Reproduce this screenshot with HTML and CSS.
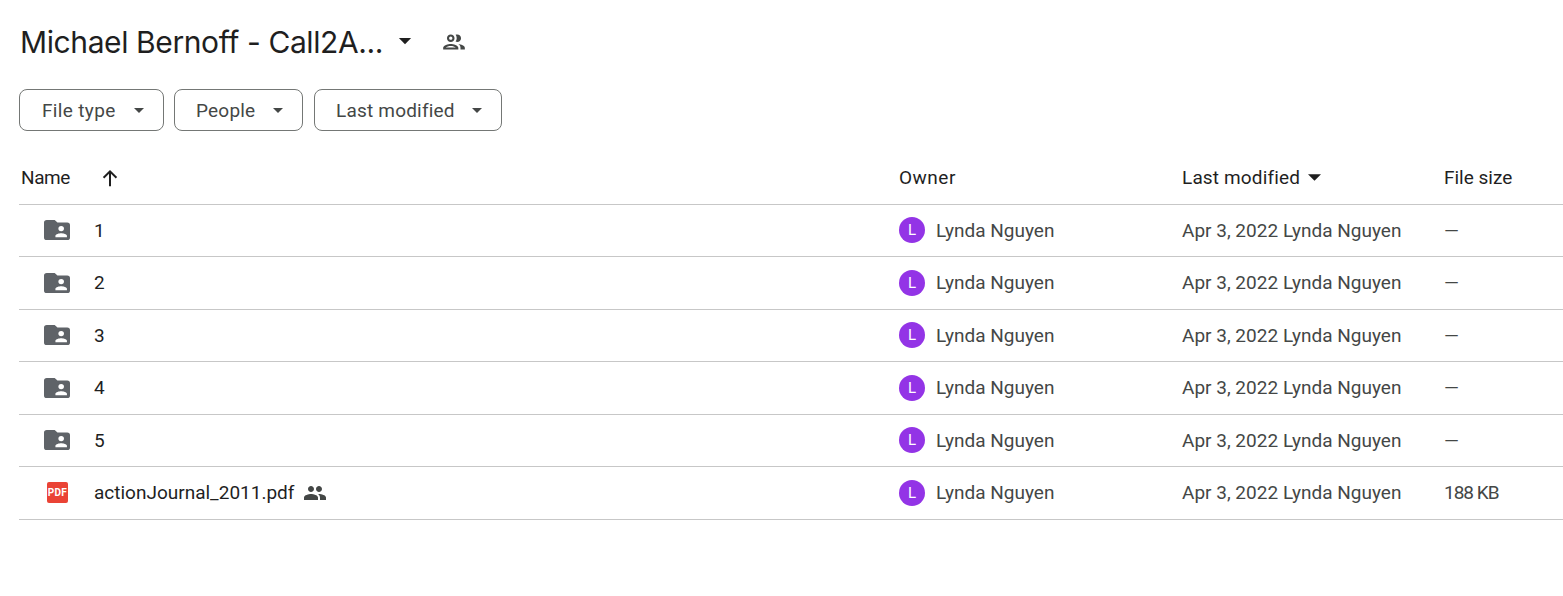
FILE: index.html
```html
<!DOCTYPE html>
<html lang="en">
<head>
<meta charset="utf-8">
<title>Michael Bernoff - Call2A...</title>
<link rel="stylesheet" href="styles.css">
</head>
<body>
<main class="page">
  <header class="title-bar">
    <h1 class="title">Michael Bernoff - Call2A...</h1>
    <svg class="title-caret" viewBox="0 0 14 8"><path d="M0 0h14L7 7z"/></svg>
    <svg class="title-people" viewBox="0 0 24 24"><path d="M9 13.75c-2.34 0-7 1.17-7 3.5V19h14v-1.75c0-2.33-4.66-3.5-7-3.5zM4.34 17c.84-.58 2.87-1.25 4.66-1.25s3.82.67 4.66 1.25H4.34zM9 12c1.93 0 3.5-1.57 3.5-3.5S10.93 5 9 5 5.5 6.57 5.5 8.5 7.07 12 9 12zm0-5c.83 0 1.5.67 1.5 1.5S9.83 10 9 10s-1.5-.67-1.5-1.5S8.17 7 9 7zm7.04 6.81c1.16.84 1.96 1.96 1.96 3.44V19h4v-1.75c0-2.02-3.5-3.17-5.96-3.44zM15 12c1.93 0 3.5-1.57 3.5-3.5S16.93 5 15 5c-.54 0-1.04.13-1.5.35.63.89 1 1.98 1 3.15s-.37 2.26-1 3.15c.46.22.96.35 1.5.35z"/></svg>
  </header>

  <div class="filters">
    <button class="chip chip-type">File type<svg class="chip-caret" viewBox="0 0 10 5"><path d="M0 0h10L5 5z"/></svg></button>
    <button class="chip chip-people">People<svg class="chip-caret" viewBox="0 0 10 5"><path d="M0 0h10L5 5z"/></svg></button>
    <button class="chip chip-mod">Last modified<svg class="chip-caret" viewBox="0 0 10 5"><path d="M0 0h10L5 5z"/></svg></button>
  </div>

  <div class="table">
    <div class="row head">
      <div class="cell name-head">Name<svg class="sort-arrow" viewBox="0 0 16 16"><path d="M8 1.500 2.300 7.200l1.100 1.100 3.800-3.800v10h1.600v-10l3.800 3.800 1.100-1.100z"/></svg></div>
      <div class="cell owner-head">Owner</div>
      <div class="cell modified-head">Last modified<svg class="head-caret" viewBox="0 0 14 7"><path d="M0 0h14L7 7z"/></svg></div>
      <div class="cell">File size</div>
    </div>

    <div class="row item">
      <div class="cell name"><span class="icon"><svg class="folder" viewBox="0 1 28 23" preserveAspectRatio="none"><path d="M3 1h8.500l3 3H25a3 3 0 0 1 3 3v14a3 3 0 0 1-3 3H3a3 3 0 0 1-3-3V4a3 3 0 0 1 3-3z"/><circle class="person" cx="18.500" cy="10.800" r="3"/><path class="person" d="M12.300 20.700v-1.500c0-2.100 4.100-3.100 6.200-3.100s6.200 1 6.200 3.100v1.500z"/></svg></span>1</div>
      <div class="cell owner"><span class="avatar">L</span>Lynda Nguyen</div>
      <div class="cell meta"><span class="date">Apr 3, 2022</span>Lynda Nguyen</div>
      <div class="cell meta">—</div>
    </div>
    <div class="row item">
      <div class="cell name"><span class="icon"><svg class="folder" viewBox="0 1 28 23" preserveAspectRatio="none"><path d="M3 1h8.500l3 3H25a3 3 0 0 1 3 3v14a3 3 0 0 1-3 3H3a3 3 0 0 1-3-3V4a3 3 0 0 1 3-3z"/><circle class="person" cx="18.500" cy="10.800" r="3"/><path class="person" d="M12.300 20.700v-1.500c0-2.100 4.100-3.100 6.200-3.100s6.200 1 6.200 3.100v1.500z"/></svg></span>2</div>
      <div class="cell owner"><span class="avatar">L</span>Lynda Nguyen</div>
      <div class="cell meta"><span class="date">Apr 3, 2022</span>Lynda Nguyen</div>
      <div class="cell meta">—</div>
    </div>
    <div class="row item">
      <div class="cell name"><span class="icon"><svg class="folder" viewBox="0 1 28 23" preserveAspectRatio="none"><path d="M3 1h8.500l3 3H25a3 3 0 0 1 3 3v14a3 3 0 0 1-3 3H3a3 3 0 0 1-3-3V4a3 3 0 0 1 3-3z"/><circle class="person" cx="18.500" cy="10.800" r="3"/><path class="person" d="M12.300 20.700v-1.500c0-2.100 4.100-3.100 6.200-3.100s6.200 1 6.200 3.100v1.500z"/></svg></span>3</div>
      <div class="cell owner"><span class="avatar">L</span>Lynda Nguyen</div>
      <div class="cell meta"><span class="date">Apr 3, 2022</span>Lynda Nguyen</div>
      <div class="cell meta">—</div>
    </div>
    <div class="row item">
      <div class="cell name"><span class="icon"><svg class="folder" viewBox="0 1 28 23" preserveAspectRatio="none"><path d="M3 1h8.500l3 3H25a3 3 0 0 1 3 3v14a3 3 0 0 1-3 3H3a3 3 0 0 1-3-3V4a3 3 0 0 1 3-3z"/><circle class="person" cx="18.500" cy="10.800" r="3"/><path class="person" d="M12.300 20.700v-1.500c0-2.100 4.100-3.100 6.200-3.100s6.200 1 6.200 3.100v1.500z"/></svg></span>4</div>
      <div class="cell owner"><span class="avatar">L</span>Lynda Nguyen</div>
      <div class="cell meta"><span class="date">Apr 3, 2022</span>Lynda Nguyen</div>
      <div class="cell meta">—</div>
    </div>
    <div class="row item">
      <div class="cell name"><span class="icon"><svg class="folder" viewBox="0 1 28 23" preserveAspectRatio="none"><path d="M3 1h8.500l3 3H25a3 3 0 0 1 3 3v14a3 3 0 0 1-3 3H3a3 3 0 0 1-3-3V4a3 3 0 0 1 3-3z"/><circle class="person" cx="18.500" cy="10.800" r="3"/><path class="person" d="M12.300 20.700v-1.500c0-2.100 4.100-3.100 6.200-3.100s6.200 1 6.200 3.100v1.500z"/></svg></span>5</div>
      <div class="cell owner"><span class="avatar">L</span>Lynda Nguyen</div>
      <div class="cell meta"><span class="date">Apr 3, 2022</span>Lynda Nguyen</div>
      <div class="cell meta">—</div>
    </div>
    <div class="row item">
      <div class="cell name"><span class="icon"><span class="pdf">PDF</span></span>actionJournal_2011.pdf<svg class="shared" viewBox="0 0 24 24"><path d="M16 11c1.660 0 2.990-1.340 2.990-3S17.660 5 16 5s-3 1.340-3 3 1.340 3 3 3zm-8 0c1.660 0 2.990-1.340 2.990-3S9.660 5 8 5 5 6.340 5 8s1.340 3 3 3zm0 2c-2.330 0-7 1.170-7 3.500V19h14v-2.500c0-2.330-4.670-3.500-7-3.500zm8 0c-.29 0-.62.02-.97.05 1.160.84 1.970 1.970 1.970 3.450V19h6v-2.500c0-2.330-4.670-3.500-7-3.500z"/></svg></div>
      <div class="cell owner"><span class="avatar">L</span>Lynda Nguyen</div>
      <div class="cell meta"><span class="date">Apr 3, 2022</span>Lynda Nguyen</div>
      <div class="cell meta file-size">188 KB</div>
    </div>
  </div>
</main>
</body>
</html>
```
FILE: styles.css
```css
* { box-sizing: border-box; }
html, body { margin: 0; height: 100%; background: #fff; overflow: hidden; }
body { font-family: Roboto, "Liberation Sans", sans-serif; color: #1f1f1f; }

.page { padding: 0 0 0 19px; }

.title-bar { display: flex; align-items: center; height: 83px; }
.title { margin: 0 0 0 1px; font-family: Inter, sans-serif; font-size: 30px; font-weight: 400; letter-spacing: -0.4px; color: #1f1f1f; white-space: nowrap; }
.title-caret { width: 14px; height: 7px; margin-left: 15px; fill: #1f1f1f; }
.title-people { width: 26px; height: 26px; margin-left: 29px; fill: #444746; }

.filters { display: flex; gap: 10px; height: 42px; margin-top: 6px; }
.chip { display: flex; align-items: center; justify-content: space-between; height: 42px; padding: 0 19px 0 21px; background: #fff; border: 1px solid #747775; border-radius: 8px; font: 400 19px Roboto, sans-serif; letter-spacing: 0.2px; color: #444746; }
.chip-type { width: 145px; padding-left: 22px; letter-spacing: 0.35px; }
.chip-people { width: 129px; }
.chip-mod { width: 188px; margin-left: 1px; }
.chip-caret { width: 10px; height: 5px; fill: #444746; }

.table { margin-top: 21px; }
.row { display: grid; grid-template-columns: 880px 283px 262px 1fr; align-items: center; border-bottom: 1px solid #c7c7c7; }
.head { height: 52.5px; font-size: 19px; color: #1f1f1f; }
.item { height: 52.5px; font-size: 19px; }
.cell { display: flex; align-items: center; white-space: nowrap; }
.name-head { padding-left: 2px; letter-spacing: -0.4px; }
.owner-head { letter-spacing: 0.5px; }
.modified-head { letter-spacing: 0.15px; }
.sort-arrow { width: 20px; height: 20px; margin-left: 30px; fill: #1f1f1f; }
.head-caret { width: 13px; height: 7px; margin-left: 8px; fill: #1f1f1f; }

.name { padding-left: 25px; color: #1f1f1f; }
.icon { display: flex; align-items: center; width: 50px; }
.folder { width: 26px; height: 20px; fill: #5f6368; }
.folder .person { fill: #fff; }
.pdf { display: flex; align-items: center; justify-content: center; width: 21px; height: 21px; margin-left: 3px; background: #ea4335; border-radius: 2px; color: #fff; font: 700 10px Roboto, sans-serif; letter-spacing: 0.3px; }
.shared { width: 24px; height: 24px; margin-left: 9px; fill: #444746; }

.owner, .meta { color: #444746; }
.avatar { display: flex; align-items: center; justify-content: center; width: 26px; height: 26px; margin-right: 11px; border-radius: 50%; background: #9334e6; color: #fff; font-size: 15px; }
.date { margin-right: 5px; }
.file-size { letter-spacing: -1px; }
```
